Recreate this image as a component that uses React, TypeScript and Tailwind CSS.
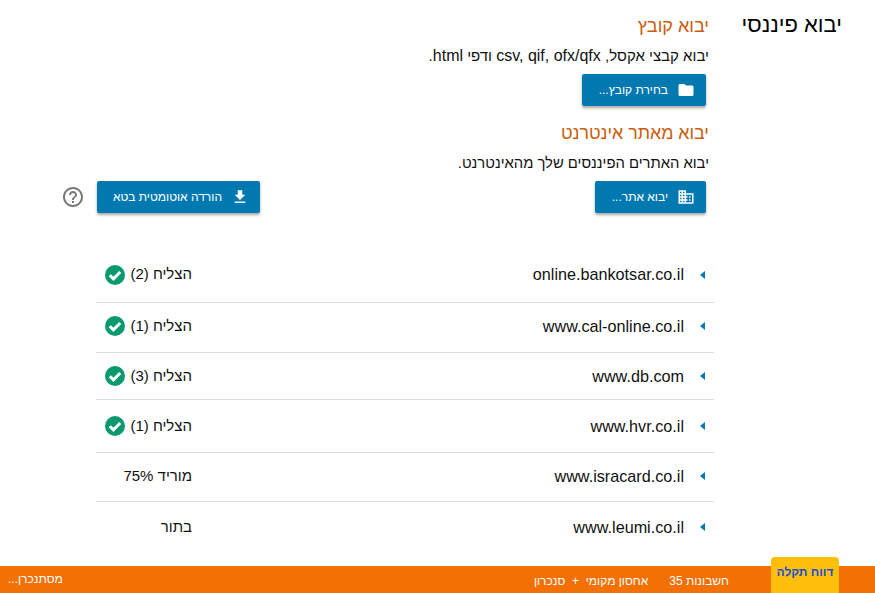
import React from 'react';

const Icon = ({ d, size = 18 }: { d: string; size?: number }) => (
    <svg width={size} height={size} viewBox="0 0 24 24" fill="currentColor" className="shrink-0">
        <path d={d} />
    </svg>
);

const FOLDER = 'M10 4H4c-1.1 0-2 .9-2 2v12c0 1.1.9 2 2 2h16c1.1 0 2-.9 2-2V8c0-1.1-.9-2-2-2h-8l-2-2z';
const DOMAIN = 'M12 7V3H2v18h20V7H12zM6 19H4v-2h2v2zm0-4H4v-2h2v2zm0-4H4V9h2v2zm0-4H4V5h2v2zm4 12H8v-2h2v2zm0-4H8v-2h2v2zm0-4H8V9h2v2zm0-4H8V5h2v2zm10 12h-8v-2h2v-2h-2v-2h2v-2h-2V9h8v10zm-2-8h-2v2h2v-2zm0 4h-2v2h2v-2z';
const DOWNLOAD = 'M19 9h-4V3H9v6H5l7 7 7-7zM5 18v2h14v-2H5z';
const HELP = 'M11 18h2v-2h-2v2zm1-16C6.48 2 2 6.48 2 12s4.48 10 10 10 10-4.48 10-10S17.52 2 12 2zm0 18c-4.41 0-8-3.59-8-8s3.59-8 8-8 8 3.59 8 8-3.59 8-8 8zm0-14c-2.21 0-4 1.79-4 4h2c0-1.1.9-2 2-2s2 .9 2 2c0 2-3 1.75-3 5h2c0-2.25 3-2.5 3-5 0-2.21-1.79-4-4-4z';

const CheckBadge = () => (
    <svg width="20" height="20" viewBox="0 0 20 20">
        <circle cx="10" cy="10" r="10" fill="#0a9a6e" />
        <path d="M4.8 10.3l3.6 3.6L15.2 7" fill="none" stroke="#fff" strokeWidth="3" />
    </svg>
);

const rows = [
    { site: 'online.bankotsar.co.il', status: 'הצליח (2)', ok: true, cls: 'h-[54px] pb-[2px]' },
    { site: 'www.cal-online.co.il', status: 'הצליח (1)', ok: true, cls: 'h-[50px] pb-[3px]' },
    { site: 'www.db.com', status: 'הצליח (3)', ok: true, cls: 'h-[47px]' },
    { site: 'www.hvr.co.il', status: 'הצליח (1)', ok: true, cls: 'h-[53px]' },
    { site: 'www.isracard.co.il', status: 'מוריד 75%', ok: false, cls: 'h-[49px] pb-[2px]' },
    { site: 'www.leumi.co.il', status: 'בתור', ok: false, cls: 'h-[50px]' },
];

const ActionButton = ({ icon, label, width }: { icon: string; label: string; width: string }) => (
    <button className={`${width} h-[32px] flex items-center gap-[9px] pr-[11px] bg-[#0079b0] text-white text-[12px] rounded-[2px] shadow-[0_2px_3px_rgba(0,0,0,0.35)]`}>
        <Icon d={icon} />
        <span>{label}</span>
    </button>
);

export default function App() {
    return (
        <div dir="rtl" className="h-[593px] w-[875px] overflow-hidden flex flex-col bg-white text-[#111] font-['Liberation_Sans',Arial,sans-serif]">
            <div className="flex-1 flex min-h-0">
                <h1 className="w-[166px] shrink-0 pr-[33px] pt-[10px] text-[22px] leading-[30px] text-black font-normal">יבוא פיננסי</h1>
                <main className="w-[650px] flex flex-col">
                    <h2 className="pt-[14px] text-[18px] leading-[24px] text-[#cc5c0c] font-normal">יבוא קובץ</h2>
                    <p className="mt-[8px] text-[15px] leading-[20px]">
                        יבוא קבצי אקסל, <span className="text-[16px]">csv, qif, ofx/qfx</span> ודפי <span className="text-[16px]">html</span>.
                    </p>
                    <div className="mt-[8px] pr-[3px]">
                        <ActionButton width="w-[124px]" icon={FOLDER} label="בחירת קובץ..." />
                    </div>
                    <h2 className="mt-[15px] text-[17.8px] leading-[24px] text-[#cc5c0c] font-normal">יבוא מאתר אינטרנט</h2>
                    <p className="mt-[8px] text-[14.8px] leading-[20px]">יבוא האתרים הפיננסים שלך מהאינטרנט.</p>
                    <div className="mt-[8px] pr-[3px] flex items-center">
                        <ActionButton width="w-[111px]" icon={DOMAIN} label="יבוא אתר..." />
                        <div className="mr-[335px]">
                            <ActionButton width="w-[163px]" icon={DOWNLOAD} label="הורדה אוטומטית בטא" />
                        </div>
                        <span className="mr-[12px] text-[#777]"><Icon d={HELP} size={24} /></span>
                    </div>
                    <ul className="mt-[36px] mr-[-5px] w-[618px] flex flex-col">
                        {rows.map((row, i) => (
                            <li key={row.site} className={`${row.cls} flex items-center ${i < rows.length - 1 ? 'border-b border-[#ddd]' : ''}`}>
                                <span className="w-[16px] mr-[9px] text-[#0079b0]">
                                    <svg width="5" height="8" viewBox="0 0 5 8" fill="currentColor"><path d="M5 0v8L0 4z" /></svg>
                                </span>
                                <span className="text-[16.2px] mr-[5px]" dir="ltr">{row.site}</span>
                                <span className="mr-auto w-[67px] whitespace-nowrap text-[15px]">{row.status}</span>
                                <span className="w-[29px] shrink-0 flex">{row.ok && <CheckBadge />}</span>
                            </li>
                        ))}
                    </ul>
                </main>
            </div>
            <footer className="relative h-[27px] shrink-0 bg-[#f37003] text-white text-[12px] flex items-center">
                <button className="absolute top-[-9px] right-[36px] w-[68px] h-[36px] pb-[6px] bg-[#fdbf0b] text-[#1a4fd8] text-[12px] font-bold rounded-t-[4px]">דווח תקלה</button>
                <span className="mr-[146px] mt-[2px]">חשבונות 35</span>
                <span className="mr-[21px] mt-[2px]">אחסון מקומי &nbsp;+&nbsp; סנכרון</span>
                <span className="mr-auto ml-[8px] mb-[2px]">מסתנכרן...</span>
            </footer>
        </div>
    );
}
